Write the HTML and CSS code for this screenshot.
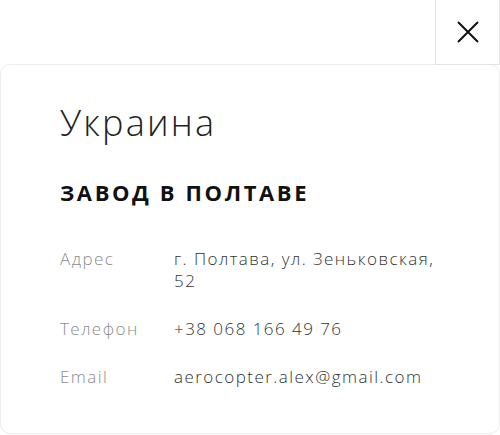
FILE: index.html
```html
<!DOCTYPE html>
<html lang="ru">
<head>
<meta charset="utf-8">
<link rel="stylesheet" href="styles.css">
</head>
<body>
<div class="modal">
  <button class="close" aria-label="Закрыть">
    <svg width="22" height="22" viewBox="0 0 22 22"><path d="M1 1L21 21M21 1L1 21" stroke="#111" stroke-width="2" fill="none"/></svg>
  </button>
  <div class="card">
    <h1 class="country">Украина</h1>
    <h2 class="plant">ЗАВОД В ПОЛТАВЕ</h2>
    <dl class="info">
      <dt>Адрес</dt><dd>г. Полтава, ул. Зеньковская, 52</dd>
      <dt>Телефон</dt><dd>+38 068 166 49 76</dd>
      <dt>Email</dt><dd>aerocopter.alex@gmail.com</dd>
    </dl>
  </div>
</div>
</body>
</html>
```
FILE: styles.css
```css
html, body { margin: 0; padding: 0; background: #fff; }
body { font-family: "Open Sans", "Noto Sans", sans-serif; color: #222; }
.modal { position: relative; width: 500px; height: 435px; padding-top: 64px; box-sizing: border-box; overflow: hidden; }
.close {
  position: absolute; top: -1px; right: 0;
  width: 65px; height: 66px;
  background: #fff; border: 1px solid #e3e3e3;
  display: flex; align-items: center; justify-content: center;
  padding: 0; cursor: pointer; z-index: 2;
}
.card {
  height: 370px; box-sizing: border-box;
  border: 1px solid #ececec; border-radius: 10px;
  padding: 36px 60px 0 59px;
}
.country { margin: 0; font-size: 36px; font-weight: 300; line-height: 44px; letter-spacing: 2.2px; color: #222; }
.plant { margin: 33px 0 0; font-size: 22px; font-weight: 700; line-height: 28px; letter-spacing: 2.6px; color: #111; }
.info {
  margin: 42px 0 0; display: grid; grid-template-columns: 114px 1fr;
  row-gap: 26px; font-size: 17px; line-height: 22px; font-weight: 300;
  letter-spacing: 1.45px;
}
.info dt { color: #8c8c8c; }
.info dd { margin: 0; color: #333; }
```
